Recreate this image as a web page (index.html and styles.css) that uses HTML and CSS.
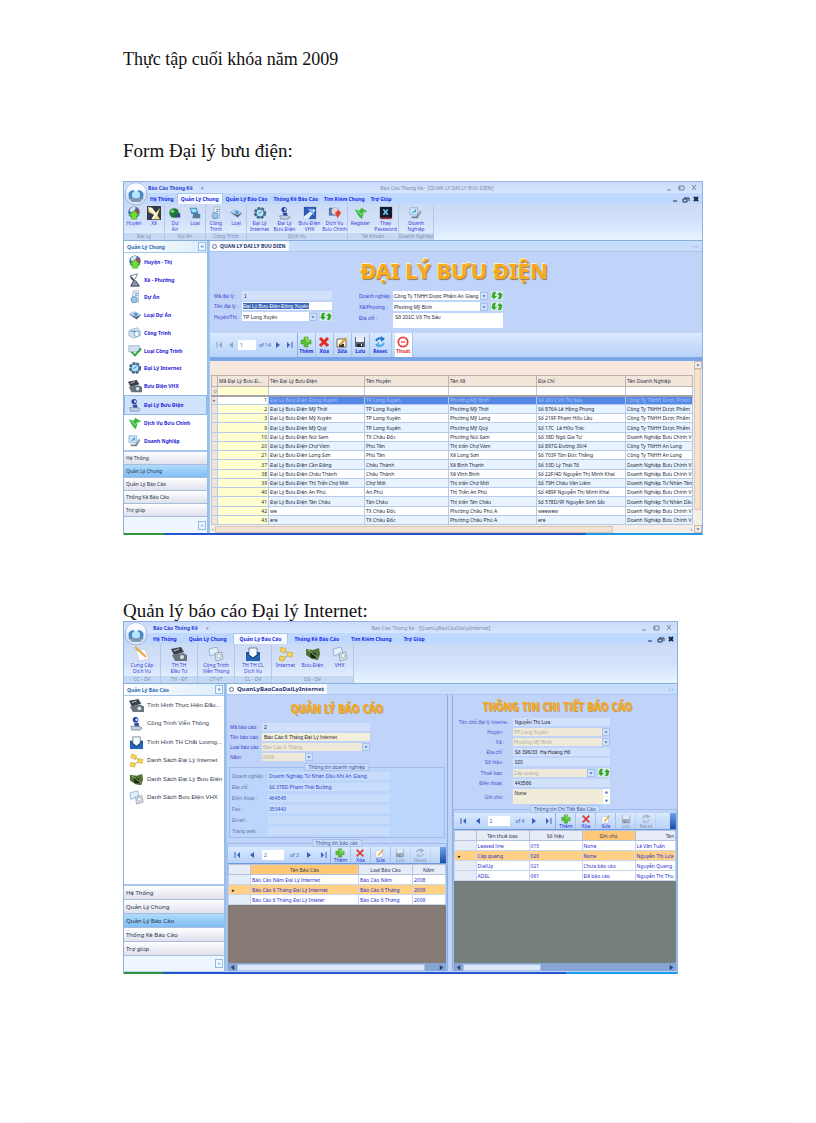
FILE: index.html
```html
<!DOCTYPE html>
<html lang="vi">
<head>
<meta charset="utf-8">
<title>Thực tập cuối khóa năm 2009</title>
<link rel="stylesheet" href="styles.css">
</head>
<body>
<svg class="defs" aria-hidden="true">
  <symbol id="orb" viewBox="0 0 24 24"><circle cx="12" cy="12" r="11" fill="#dde7f5" stroke="#9fb6da"/><path d="M2 10a10 9 0 0 1 20 0q-10 4-20 0z" fill="#f6faff"/><path d="M5 16q-2-7 4-8l3 2 3-2q6 1 4 8z" fill="#4b87c4"/><circle cx="12" cy="13" r="4" fill="#b4e5f9"/><path d="M4 16h16l-4 4H8z" fill="#8098bd"/></symbol>
  <symbol id="globe" viewBox="0 0 16 16"><circle cx="8" cy="7" r="6.5" fill="#4772a8"/><path d="M3 4q4-5 7-2L8 6 4 7z" fill="#d7e6f2"/><path d="M11 3l3 3-2 4-3-4z" fill="#b04848"/><path d="M8 5l6 6h-3v4H5v-4H2z" fill="#6fe02f" stroke="#2f9c16" stroke-width=".5"/></symbol>
  <symbol id="dish" viewBox="0 0 16 16"><path d="M2 2q1 8 8 8z" fill="#47516b"/><path d="M3 3l8-2-3 6" fill="none" stroke="#67738f"/><path d="M7 8l-4 7h10L9 9" fill="#8a94ad" stroke="#343c52"/></symbol>
  <symbol id="dishy" viewBox="0 0 16 16"><rect width="16" height="16" fill="#33394a"/><path d="M1 1l5 1 4 6 5-6-3 9 3 4H7l1-5-6-3z" fill="#f3df8c"/><path d="M3 2l7 7-4 6" stroke="#fff" stroke-width="2" fill="none"/></symbol>
  <symbol id="doc" viewBox="0 0 16 16"><path d="M6 1h6v13H4z" fill="#dfeaf5" stroke="#8baac8" stroke-width=".7"/><circle cx="7" cy="11" r="3.5" fill="#9dc3e6" stroke="#6b93bb"/><path d="M8 4h3M8 6h3" stroke="#6b93bb"/></symbol>
  <symbol id="ball" viewBox="0 0 16 16"><circle cx="7" cy="8" r="5.5" fill="#1e7a35"/><circle cx="5" cy="6" r="2" fill="#75cc75"/><path d="M8 10l6-2v5H8z" fill="#2f4a82"/></symbol>
  <symbol id="drive" viewBox="0 0 16 16"><path d="M1 7l6-3 8 4-5 5z" fill="#596a80"/><path d="M1 7l6-3 8 4-6 2z" fill="#b6d1e8"/><circle cx="9" cy="7" r="2" fill="#4d9cdb"/></symbol>
  <symbol id="screen" viewBox="0 0 16 16"><path d="M2 2h8l2 7H4z" fill="#3d86bc"/><path d="M3 3h6l1 4H5z" fill="#a4dff5"/><path d="M6 9h8v5H5z" fill="#567a88"/></symbol>
  <symbol id="print" viewBox="0 0 16 16"><path d="M1 5l9-3 4 3v6l-8 3-5-3z" fill="#cfe2ef" stroke="#7da5bd" stroke-width=".7"/><circle cx="10" cy="9" r="3" fill="#fff" stroke="#5c9cc5"/><path d="M3 6h6" stroke="#387bab"/></symbol>
  <symbol id="check" viewBox="0 0 16 16"><path d="M1 2h12v7H1z" fill="#d2e1f1" stroke="#789bbd" stroke-width=".7"/><path d="M4 9l4 4 7-8" fill="none" stroke="#2ca23c" stroke-width="2.2"/></symbol>
  <symbol id="gear" viewBox="0 0 16 16"><circle cx="8" cy="8" r="5.5" fill="#4787b0" stroke="#4c6683" stroke-width="3" stroke-dasharray="3 1.5"/><circle cx="8" cy="8" r="3.8" fill="#b4e5fa"/><path d="M6 9l4-3" stroke="#2c78ab"/></symbol>
  <symbol id="machine" viewBox="0 0 16 16"><path d="M0 3l10-2 3 5-10 3z" fill="#3a4149"/><path d="M3 5l5-2" stroke="#cbd5dc"/><path d="M1 9l11-2 4 2v6H4z" fill="#69747d"/><circle cx="11" cy="11" r="2" fill="#dbe5eb"/></symbol>
  <symbol id="person" viewBox="0 0 16 16"><circle cx="7" cy="4" r="3" fill="#243d9c"/><circle cx="8" cy="4" r="1.3" fill="#dce6ff"/><path d="M5 8l5-1 1 4-4 1z" fill="#354aa2"/><path d="M2 11h9l3 2-2 2H3z" fill="#c5d0e3" stroke="#65748e" stroke-width=".7"/></symbol>
  <symbol id="leaf" viewBox="0 0 16 16"><path d="M1 4l6 1 1-3 7 4-4 2-2 7-4-4z" fill="#35b83c"/><path d="M4 5l4 5 4-4" stroke="#bdf5ad" fill="none"/></symbol>
  <symbol id="monitor" viewBox="0 0 16 16"><path d="M1 2h9v8H1z" fill="#cee4f5" stroke="#7b9fbd" stroke-width=".7"/><path d="M3 8l5-5v4z" fill="#4fa7dc"/><path d="M7 13l6-8 1 2-4 7z" fill="#8c98a7"/><path d="M3 12h7v2H3z" fill="#78818f"/></symbol>
  <symbol id="bluebox" viewBox="0 0 16 16"><rect x="1" y="1" width="14" height="14" fill="#2b59b5"/><path d="M1 12L12 3l2 2-8 10H1z" fill="#e2edfb"/><path d="M5 3h6l2 8z" fill="#86b4ec"/></symbol>
  <symbol id="redbox" viewBox="0 0 16 16"><path d="M1 2h10v9H1z" fill="#5878a8"/><circle cx="8" cy="6" r="4" fill="#e5cfd5"/><path d="M8 8l4-4 3 4-4 6z" fill="#dc4834"/></symbol>
  <symbol id="key" viewBox="0 0 16 16"><rect x="1" y="1" width="14" height="13" fill="#12192d"/><path d="M5 4l5 6M10 4l-5 6" stroke="#65cbe8" stroke-width="2"/><path d="M2 14h12" stroke="#9a2a35" stroke-width="2"/></symbol>
  <symbol id="pen" viewBox="0 0 16 16"><path d="M2 5l9-2 4 10-10 2z" fill="#fcfcff" stroke="#b8c5dc" stroke-width=".7"/><path d="M1 1l11 10" stroke="#e3a739" stroke-width="2"/></symbol>
  <symbol id="mail" viewBox="0 0 16 16"><path d="M1 6h14v9H1z" fill="#2266b5"/><path d="M4 2h8v7l-4 3-4-3z" fill="#f6faff" stroke="#273c5c" stroke-width=".6"/><path d="M1 7l7 5 7-5" stroke="#163e77" fill="none"/></symbol>
  <symbol id="net" viewBox="0 0 16 16"><path d="M5 4l7 4-7 5" fill="none" stroke="#91a4b8"/><path d="M3 1l5 2-1 4-5-2zM10 6l5 1-1 4-5-1zM2 10l5 1-1 4-5-1z" fill="#f7d654" stroke="#c69d24" stroke-width=".6"/></symbol>
  <symbol id="chip" viewBox="0 0 16 16"><path d="M1 3l7 1 6-2 1 6-2 6-6-1-6-4z" fill="#4f7434"/><path d="M5 6l5 1 2 5H6z" fill="#182514"/><path d="M3 4l10 8" stroke="#a2bc7c"/></symbol>
  <symbol id="cards" viewBox="0 0 16 16"><path d="M1 3l8-2 2 6-9 3z" fill="#e5f1fa" stroke="#73a0c7" stroke-width=".7"/><path d="M7 7l7-1 1 7-7 2z" fill="#dce3eb" stroke="#8692a2" stroke-width=".7"/><circle cx="11" cy="10" r="2" fill="#fff" stroke="#7b8f9f" stroke-width=".6"/></symbol>
  <symbol id="plus" viewBox="0 0 12 12"><path d="M4 1h4v3h3v4H8v3H4V8H1V4h3z" fill="#5abf34" stroke="#45992f" stroke-width=".6"/><path d="M5 2h2v3h3" stroke="#adeb82" fill="none"/></symbol>
  <symbol id="cross" viewBox="0 0 12 12"><path d="M2 2l8 8M10 2l-8 8" stroke="#e02c20" stroke-width="3"/></symbol>
  <symbol id="thincross" viewBox="0 0 12 12"><path d="M2 2l8 8M10 2l-8 8" stroke="#dd3a2c" stroke-width="2"/></symbol>
  <symbol id="edit" viewBox="0 0 12 12"><path d="M1 3h9v8H1z" fill="#fbfaf2" stroke="#766a5a"/><path d="M3 8h5v3H3z" fill="#333"/><path d="M4 9l6-7" stroke="#dd9827" stroke-width="2"/></symbol>
  <symbol id="note" viewBox="0 0 12 12"><path d="M1 3h8v8H1z" fill="#fdfdff" stroke="#b3bfd4" stroke-width=".7"/><path d="M4 9l6-7" stroke="#e3a233" stroke-width="1.6"/></symbol>
  <symbol id="disk" viewBox="0 0 12 12"><path d="M1 1h10v10H1z" fill="#5e6276"/><path d="M2 1h8v5H2z" fill="#edf0f8"/><path d="M3 8h6v3H3z" fill="#252a3a"/><path d="M7 8h1v2H7z" fill="#fff"/></symbol>
  <symbol id="reset" viewBox="0 0 12 12"><path d="M2 5q2-4 6-2" fill="none" stroke="#2376c9" stroke-width="2"/><path d="M7 0l4 3-4 3z" fill="#2376c9"/><path d="M10 7q-2 4-6 2" fill="none" stroke="#51a7df" stroke-width="2"/><path d="M5 6L1 9l4 3z" fill="#51a7df"/></symbol>
  <symbol id="stop" viewBox="0 0 12 12"><circle cx="6" cy="6" r="4.7" fill="#fff" stroke="#ef3f3f" stroke-width="1.8"/><path d="M4 6h4" stroke="#ef3636" stroke-width="1.2"/></symbol>
  <symbol id="swap" viewBox="0 0 12 9"><rect width="12" height="9" rx="1" fill="#d9ebe6"/><path d="M5 1Q1 0 1 5H0l3 3 3-3H4q0-2 1-4zM7 8q4 1 4-4h1L9 1 6 4h2q0 2-1 4z" fill="#39a832"/></symbol>
  <symbol id="first" viewBox="0 0 8 8"><path d="M1 1v6" stroke="currentColor"/><path d="M6 1L3 4l3 3z" fill="currentColor"/></symbol>
  <symbol id="prev" viewBox="0 0 8 8"><path d="M6 1L2 4l4 3z" fill="currentColor"/></symbol>
  <symbol id="next" viewBox="0 0 8 8"><path d="M2 1l4 3-4 3z" fill="currentColor"/></symbol>
  <symbol id="last" viewBox="0 0 8 8"><path d="M7 1v6" stroke="currentColor"/><path d="M2 1l3 3-3 3z" fill="currentColor"/></symbol>
  <symbol id="down" viewBox="0 0 8 8"><path d="M2 3h4L4 6z" fill="#4a74b0"/></symbol>
  <symbol id="up" viewBox="0 0 8 8"><path d="M2 5h4L4 2z" fill="#4a74b0"/></symbol>
  <symbol id="winbtns" viewBox="0 0 32 8"><path d="M1 6h4M13 2h5v4h-5zM12 4h3M26 1l4 5M30 1l-4 5" fill="none" stroke="#7887a0"/></symbol>
  <symbol id="mdibtns" viewBox="0 0 28 8"><path d="M1 6h4M11 4h4v3h-4zM12 3h5v3" fill="none" stroke="#25304a"/><path d="M22 2l4 4M26 2l-4 4" stroke="#1c2436" stroke-width="2"/></symbol>
</svg>

<div class="page">
<header class="running">Thực tập cuối khóa năm 2009</header>

<h2 class="caption first">Form Đại lý bưu điện:</h2>
<section class="window win-a">
  <div class="titlebar">
    <svg class="orb"><use href="#orb"/></svg>
    <b class="quick">Báo Cáo Thống Kê</b><span class="tick">▾</span>
    <span class="wtitle">Bao Cao Thong Ke - [QUAN LY DAI LY BUU DIEN]</span>
    <svg class="winbtns"><use href="#winbtns"/></svg>
  </div>
  <nav class="tabs">
    <button>Hệ Thống</button><button class="on">Quản Lý Chung</button><button>Quản Lý Báo Cáo</button><button>Thống Kê Báo Cáo</button><button>Tìm Kiếm Chung</button><button>Trợ Giúp</button>
    <svg class="mdibtns"><use href="#mdibtns"/></svg>
  </nav>
  <div class="ribbon">
    <div class="rgroup"><div class="ritems"><button><svg><use href="#globe"/></svg>Huyện</button><button><svg><use href="#dishy"/></svg>Xã</button></div><div class="rcap">Đại Lý</div></div>
    <div class="rgroup"><div class="ritems"><button><svg><use href="#ball"/></svg>Dự<br>Án</button><button><svg><use href="#screen"/></svg>Loại</button></div><div class="rcap">Dự Án</div></div>
    <div class="rgroup"><div class="ritems"><button><svg><use href="#doc"/></svg>Công<br>Trình</button><button><svg><use href="#drive"/></svg>Loại</button></div><div class="rcap">Công Trình</div></div>
    <div class="rgroup wide"><div class="ritems"><button><svg><use href="#gear"/></svg>Đại Lý<br>Internet</button><button><svg><use href="#person"/></svg>Đại Lý<br>Bưu Điện</button><button><svg><use href="#bluebox"/></svg>Bưu Điện<br>VHX</button><button><svg><use href="#redbox"/></svg>Dịch Vụ<br>Bưu Chính</button></div><div class="rcap">Dịch Vụ</div></div>
    <div class="rgroup wide"><div class="ritems"><button><svg><use href="#leaf"/></svg>Register</button><button><svg><use href="#key"/></svg>Thay<br>Password</button></div><div class="rcap">Tài Khoản</div></div>
    <div class="rgroup wide"><div class="ritems"><button><svg><use href="#monitor"/></svg>Doanh<br>Nghiệp</button></div><div class="rcap">Doanh Nghiệp</div></div>
  </div>
  <div class="body">
    <aside class="side">
      <div class="sidehead"><span>Quản Lý Chung</span><button class="fold" aria-label="Thu gọn">«</button></div>
      <ul class="sidelist">
        <li><svg><use href="#globe"/></svg>Huyện - Thị</li>
        <li><svg><use href="#dish"/></svg>Xã - Phường</li>
        <li><svg><use href="#doc"/></svg>Dự Án</li>
        <li><svg><use href="#drive"/></svg>Loại Dự Án</li>
        <li><svg><use href="#print"/></svg>Công Trình</li>
        <li><svg><use href="#check"/></svg>Loại Công Trình</li>
        <li><svg><use href="#gear"/></svg>Đại Lý Internet</li>
        <li><svg><use href="#machine"/></svg>Bưu Điện VHX</li>
        <li class="on"><svg><use href="#person"/></svg>Đại Lý Bưu Điện</li>
        <li><svg><use href="#leaf"/></svg>Dịch Vụ Bưu Chính</li>
        <li><svg><use href="#monitor"/></svg>Doanh Nghiệp</li>
      </ul>
      <div class="accordion"><button>Hệ Thống</button><button class="on">Quản Lý Chung</button><button>Quản Lý Báo Cáo</button><button>Thống Kê Báo Cáo</button><button>Trợ giúp</button></div>
      <div class="sidefoot"><button class="fold" aria-label="Tùy chọn">»</button></div>
    </aside>
    <main class="main">
      <div class="doctabs"><span class="doctab"><i></i>QUAN LY DAI LY BUU DIEN</span><span class="docnav">‹ ›</span></div>
      <form class="hero">
        <h1>ĐẠI LÝ BƯU ĐIỆN</h1>
        <div class="cols">
          <div class="fields fa">
            <label for="a1">Mã đại lý :</label><input id="a1" class="flat" value="1">
            <label for="a2">Tên đại lý :</label><span class="inputbox"><mark>Đại Lý Bưu Điện Đông Xuyên</mark><input id="a2" aria-label="Tên đại lý"></span>
            <label for="a3">Huyện/Thị :</label><span class="combo"><select id="a3"><option>TP Long Xuyên</option></select><svg class="arr"><use href="#down"/></svg><svg class="swap"><use href="#swap"/></svg></span>
          </div>
          <div class="fields fb">
            <label for="a4">Doanh nghiệp :</label><span class="combo"><select id="a4"><option>Công Ty TNHH Dược Phẩm An Giang</option></select><svg class="arr"><use href="#down"/></svg><svg class="swap"><use href="#swap"/></svg></span>
            <label for="a5">Xã/Phường :</label><span class="combo"><select id="a5"><option>Phường Mỹ Bình</option></select><svg class="arr"><use href="#down"/></svg><svg class="swap"><use href="#swap"/></svg></span>
            <label for="a6">Địa chỉ :</label><textarea id="a6">Số 201C Võ Thị Sáu</textarea>
          </div>
        </div>
      </form>
      <div class="toolbar">
        <div class="pager"><svg class="dim"><use href="#first"/></svg><svg class="dim"><use href="#prev"/></svg><input aria-label="Trang" value="1"><span>of 14</span><svg><use href="#next"/></svg><svg><use href="#last"/></svg></div>
        <button><svg><use href="#plus"/></svg>Thêm</button><button><svg><use href="#cross"/></svg>Xóa</button><button><svg><use href="#edit"/></svg>Sửa</button><button><svg><use href="#disk"/></svg>Lưu</button><button class="sp"><svg><use href="#reset"/></svg>Reset</button><button class="hot"><svg><use href="#stop"/></svg>Thoát</button>
      </div>
      <div class="gridwrap">
        <div class="gridpane">
          <div class="band"></div>
          <table class="grid-a">
            <colgroup><col class="c1"><col class="c2"><col class="c3"><col class="c4"><col class="c5"><col class="c6"><col></colgroup>
            <thead><tr><th></th><th>Mã Đại Lý Bưu Đ...</th><th>Tên Đại Lý Bưu Điện</th><th>Tên Huyện</th><th>Tên Xã</th><th>Địa Chỉ</th><th>Tên Doanh Nghiệp</th></tr>
            <tr class="filter"><td>⊙</td><td></td><td></td><td></td><td></td><td></td><td></td></tr></thead>
            <tbody>
            <tr class="sel"><td>▸</td><td>1</td><td>Đại Lý Bưu Điện Đông Xuyên</td><td>TP Long Xuyên</td><td>Phường Mỹ Bình</td><td>Số 201C Võ Thị Sáu</td><td>Công Ty TNHH Dược Phẩm</td></tr>
            <tr><td></td><td>2</td><td>Đại Lý Bưu Điện Mỹ Thới</td><td>TP Long Xuyên</td><td>Phường Mỹ Thới</td><td>Số 876A Lê Hồng Phong</td><td>Công Ty TNHH Dược Phẩm</td></tr>
            <tr><td></td><td>3</td><td>Đại Lý Bưu Điện Mỹ Xuyên</td><td>TP Long Xuyên</td><td>Phường Mỹ Long</td><td>Số 219F Phạm Hữu Lầu</td><td>Công Ty TNHH Dược Phẩm</td></tr>
            <tr><td></td><td>9</td><td>Đại Lý Bưu Điện Mỹ Quý</td><td>TP Long Xuyên</td><td>Phường Mỹ Quý</td><td>Số 17C&nbsp; Lê Hữu Trác</td><td>Công Ty TNHH Dược Phẩm</td></tr>
            <tr><td></td><td>10</td><td>Đại Lý Bưu Điện Núi Sam</td><td>TX Châu Đốc</td><td>Phường Núi Sam</td><td>Số 38D Ngô Gia Tự</td><td>Doanh Nghiệp Bưu Chính V</td></tr>
            <tr><td></td><td>20</td><td>Đại Lý Bưu Điện Chợ Vàm</td><td>Phú Tân</td><td>Thị trấn Chợ Vàm</td><td>Số 897G Đường 30/4</td><td>Công Ty TNHH An Long</td></tr>
            <tr><td></td><td>21</td><td>Đại Lý Bưu Điện Long Sơn</td><td>Phú Tân</td><td>Xã Long Sơn</td><td>Số 703F Tôn Đức Thắng</td><td>Công Ty TNHH An Long</td></tr>
            <tr><td></td><td>37</td><td>Đại Lý Bưu Điện Cần Đăng</td><td>Châu Thành</td><td>Xã Bình Thạnh</td><td>Số 33D Lý Thái Tổ</td><td>Doanh Nghiệp Bưu Chính V</td></tr>
            <tr><td></td><td>38</td><td>Đại Lý Bưu Điện Châu Thành</td><td>Châu Thành</td><td>Xã Vĩnh Bình</td><td>Số 22F/4D Nguyễn Thị Minh Khai</td><td>Doanh Nghiệp Bưu Chính V</td></tr>
            <tr><td></td><td>39</td><td>Đại Lý Bưu Điện Thị Trấn Chợ Mới</td><td>Chợ Mới</td><td>Thị trấn Chợ Mới</td><td>Số 79H Châu Văn Liêm</td><td>Doanh Nghiệp Tư Nhân Tân</td></tr>
            <tr><td></td><td>40</td><td>Đại Lý Bưu Điện An Phú</td><td>An Phú</td><td>Thị Trấn An Phú</td><td>Số 489F Nguyễn Thị Minh Khai</td><td>Doanh Nghiệp Bưu Chính V</td></tr>
            <tr><td></td><td>41</td><td>Đại Lý Bưu Điện Tân Châu</td><td>Tân Châu</td><td>Thị trấn Tân Châu</td><td>Số 578D/9F Nguyễn Sinh Sắc</td><td>Doanh Nghiệp Tư Nhân Dầu</td></tr>
            <tr><td></td><td>42</td><td>we</td><td>TX Châu Đốc</td><td>Phường Châu Phú A</td><td>weewew</td><td>Doanh Nghiệp Bưu Chính V</td></tr>
            <tr><td></td><td>43</td><td>ere</td><td>TX Châu Đốc</td><td>Phường Châu Phú A</td><td>ere</td><td>Doanh Nghiệp Bưu Chính V</td></tr>
            </tbody>
          </table>
          <div class="hscroll"><span>‹</span><i></i><span>›</span></div>
        </div>
        <div class="vscroll"><svg><use href="#up"/></svg><i></i><svg><use href="#down"/></svg></div>
      </div>
    </main>
  </div>
  <div class="taskbar"></div>
</section>

<h2 class="caption second">Quản lý báo cáo Đại lý Internet:</h2>
<section class="window win-b">
  <div class="titlebar">
    <svg class="orb"><use href="#orb"/></svg>
    <b class="quick">Báo Cáo Thống Kê</b><span class="tick">▾</span>
    <span class="wtitle">Bao Cao Thong Ke - [QuanLyBaoCaoDaiLyInternet]</span>
    <svg class="winbtns"><use href="#winbtns"/></svg>
  </div>
  <nav class="tabs">
    <button>Hệ Thống</button><button>Quản Lý Chung</button><button class="on">Quản Lý Báo Cáo</button><button>Thống Kê Báo Cáo</button><button>Tìm Kiếm Chung</button><button>Trợ Giúp</button>
    <svg class="mdibtns"><use href="#mdibtns"/></svg>
  </nav>
  <div class="ribbon">
    <div class="rgroup"><div class="ritems"><button><svg><use href="#pen"/></svg>Cung Cấp<br>Dịch Vụ</button></div><div class="rcap">CC - DV</div></div>
    <div class="rgroup"><div class="ritems"><button><svg><use href="#machine"/></svg>TH TH<br>Đầu Tư</button></div><div class="rcap">TH - ĐT</div></div>
    <div class="rgroup"><div class="ritems"><button><svg><use href="#cards"/></svg>Công Trình<br>Viễn Thông</button></div><div class="rcap">CT-VT</div></div>
    <div class="rgroup"><div class="ritems"><button><svg><use href="#mail"/></svg>TH TH CL<br>Dịch Vụ</button></div><div class="rcap">CL - DV</div></div>
    <div class="rgroup trio"><div class="ritems"><button><svg><use href="#net"/></svg>Internet</button><button><svg><use href="#chip"/></svg>Bưu Điện</button><button><svg><use href="#cards"/></svg>VHX</button></div><div class="rcap">DS - DV</div></div>
  </div>
  <div class="body">
    <aside class="side">
      <div class="sidehead"><span>Quản Lý Báo Cáo</span><button class="fold" aria-label="Thu gọn">«</button></div>
      <ul class="sidelist">
        <li><svg><use href="#machine"/></svg>Tình Hình Thực Hiện Đầu...</li>
        <li><svg><use href="#person"/></svg>Công Trình Viễn Thông</li>
        <li><svg><use href="#mail"/></svg>Tình Hình TH Chất Lượng...</li>
        <li><svg><use href="#net"/></svg>Danh Sách Đại Lý Internet</li>
        <li><svg><use href="#chip"/></svg>Danh Sách Đại Lý Bưu Điện</li>
        <li><svg><use href="#cards"/></svg>Danh Sách Bưu Điện VHX</li>
      </ul>
      <div class="accordion"><button>Hệ Thống</button><button>Quản Lý Chung</button><button class="on">Quản Lý Báo Cáo</button><button>Thống Kê Báo Cáo</button><button>Trợ giúp</button></div>
      <div class="sidefoot"><button class="fold" aria-label="Tùy chọn">»</button></div>
    </aside>
    <main class="main">
      <div class="doctabs"><span class="doctab"><i></i>QuanLyBaoCaoDaiLyInternet</span><span class="docnav">‹ ›</span></div>
      <div class="split">
        <div class="pane left">
          <h1>QUẢN LÝ BÁO CÁO</h1>
          <div class="fields fc">
            <label for="b1">Mã báo cáo:</label><input id="b1" class="flat" value="2">
            <label for="b2">Tên báo cáo:</label><input id="b2" class="cream" value="Báo Cáo 6 Tháng Đại Lý Internet">
            <label for="b3">Loại báo cáo:</label><span class="combo off"><select id="b3"><option>Báo Cáo 6 Tháng</option></select><svg class="arr"><use href="#down"/></svg></span>
            <label for="b4">Năm:</label><span class="combo off short"><select id="b4"><option>2009</option></select><svg class="arr"><use href="#down"/></svg></span>
          </div>
          <fieldset class="info"><legend>Thông tin doanh nghiệp</legend>
            <dl><dt>Doanh nghiệp :</dt><dd>Doanh Nghiệp Tư Nhân Dầu Khí An Giang</dd><dt>Địa chỉ :</dt><dd>Số 378D Phạm Thái Bường</dd><dt>Điện thoại :</dt><dd>464545</dd><dt>Fax :</dt><dd>353443</dd><dt>Email :</dt><dd></dd><dt>Trang web :</dt><dd></dd></dl>
          </fieldset>
          <fieldset class="listbox"><legend>Thông tin báo cáo</legend>
            <div class="toolbar">
              <div class="pager"><svg><use href="#first"/></svg><svg><use href="#prev"/></svg><input aria-label="Trang" value="2"><span>of 3</span><svg><use href="#next"/></svg><svg><use href="#last"/></svg></div>
              <button><svg><use href="#plus"/></svg>Thêm</button><button><svg><use href="#thincross"/></svg>Xóa</button><button><svg><use href="#note"/></svg>Sửa</button><button class="faded"><svg><use href="#disk"/></svg>Lưu</button><button class="faded"><svg><use href="#reset"/></svg>Reset</button><i class="grip"></i>
            </div>
            <table class="grid-b">
              <colgroup><col class="d1"><col class="d2"><col class="d4"><col></colgroup>
              <thead><tr><th></th><th class="hot">Tên Báo Cáo</th><th>Loại Báo Cáo</th><th>Năm</th></tr></thead>
              <tbody><tr><td></td><td>Báo Cáo Năm Đại Lý Internet</td><td>Báo Cáo Năm</td><td>2008</td></tr>
              <tr class="sel"><td>▸</td><td>Báo Cáo 6 Tháng Đại Lý Internet</td><td>Báo Cáo 6 Tháng</td><td>2009</td></tr>
              <tr><td></td><td>Báo Cáo 6 Tháng Đại Lý Inteter</td><td>Báo Cáo 6 Tháng</td><td>2009</td></tr></tbody>
            </table>
            <div class="void"></div>
            <div class="hscroll"><svg><use href="#prev"/></svg><i></i><svg><use href="#next"/></svg></div>
          </fieldset>
        </div>
        <div class="pane right">
          <h1>THÔNG TIN CHI TIẾT BÁO CÁO</h1>
          <div class="fields fd">
            <label for="e1">Tên chủ đại lý Interne..</label><input id="e1" class="flat" value="Nguyễn Thị Lựa">
            <label for="e2">Huyện :</label><span class="combo off"><select id="e2"><option>TP Long Xuyên</option></select><svg class="arr"><use href="#down"/></svg></span>
            <label for="e3">Xã :</label><span class="combo off"><select id="e3"><option>Phường Mỹ Bình</option></select><svg class="arr"><use href="#down"/></svg></span>
            <label for="e4">Địa chỉ :</label><input id="e4" class="flat" value="Số 396/33  Hạ Hoàng Hổ">
            <label for="e5">Số hiệu :</label><input id="e5" class="flat" value="020">
            <label for="e6">Thuê bao :</label><span class="combo off"><select id="e6"><option>Cáp quang</option></select><svg class="arr"><use href="#down"/></svg><svg class="swap"><use href="#swap"/></svg></span>
            <label for="e7">Điện thoại :</label><input id="e7" class="flat" value="443566">
            <label for="e8">Ghi chú :</label><span class="memo"><textarea id="e8">None</textarea><span><svg><use href="#up"/></svg><svg><use href="#down"/></svg></span></span>
          </div>
          <fieldset class="listbox"><legend>Thông tin Chi Tiết Báo Cáo</legend>
            <div class="toolbar">
              <div class="pager"><svg><use href="#first"/></svg><svg><use href="#prev"/></svg><input aria-label="Trang" value="2"><span>of 4</span><svg><use href="#next"/></svg><svg><use href="#last"/></svg></div>
              <button><svg><use href="#plus"/></svg>Thêm</button><button><svg><use href="#thincross"/></svg>Xóa</button><button><svg><use href="#note"/></svg>Sửa</button><button class="faded"><svg><use href="#disk"/></svg>Lưu</button><button class="faded"><svg><use href="#reset"/></svg>Reset</button><i class="grip"></i>
            </div>
            <table class="grid-b">
              <colgroup><col class="d1"><col class="d3"><col class="d3"><col class="d3"><col></colgroup>
              <thead><tr><th></th><th>Tên thuê bao</th><th>Số hiệu</th><th class="hot">Ghi chú</th><th class="end">Tên</th></tr></thead>
              <tbody><tr><td></td><td>Leased line</td><td>015</td><td>None</td><td>Lê Văn Tuấn</td></tr>
              <tr class="sel"><td>▸</td><td>Cáp quang</td><td>020</td><td>None</td><td>Nguyễn Thị Lựa</td></tr>
              <tr><td></td><td>DialUp</td><td>021</td><td>Chưa báo cáo</td><td>Nguyễn Quang</td></tr>
              <tr><td></td><td>ADSL</td><td>061</td><td>Đã báo cáo</td><td>Nguyễn Thị Thu</td></tr></tbody>
            </table>
            <div class="void green"></div>
            <div class="hscroll half"><svg><use href="#prev"/></svg><i></i><svg><use href="#next"/></svg></div>
          </fieldset>
        </div>
      </div>
    </main>
  </div>
  <div class="taskbar"></div>
</section>
<footer class="edge"></footer>
</div>
</body>
</html>
```

FILE: styles.css
```css
* { box-sizing: border-box; }
body { margin: 0; background: #fff; color: #111; font-family: "Liberation Serif", serif; }
.defs { position: absolute; width: 0; height: 0; }
.page { min-height: 100vh; padding: 48px 24px 0 123px; display: flex; flex-direction: column; }
.running { font-size: 18px; line-height: 22px; }
.caption { margin: 0; font-size: 19px; line-height: 22px; font-weight: 400; }
.caption.first { margin-top: 70px; margin-bottom: 19px; }
.caption.second { margin-top: 65px; line-height: 21px; }
.edge { margin: auto 0 0 -98px; border-bottom: 1px dotted #e2e2e2; }

button, input, select, textarea { font: inherit; color: inherit; border: 0; padding: 0; margin: 0; background: none; border-radius: 0; min-width: 0; }
.window { width: 100%; font: 5px/6px "Noto Sans", sans-serif; color: #26304a; background: #c0d4f9; border: 1px solid #8fb2e2; border-bottom: 0; white-space: nowrap; }
.win-a { max-width: 580px; }
.win-b { max-width: 555px; }

.titlebar { height: 11px; display: flex; align-items: center; background: linear-gradient(#c9dafb, #d7e6fd); position: relative; padding-right: 4px; }
.orb { position: absolute; left: 0; top: 0; width: 24px; height: 24px; z-index: 1; }
.quick { margin-left: 24px; color: #2a3ecb; }
.tick { margin-left: 8px; color: #7d8aa6; }
.wtitle { flex: 1; text-align: center; color: #7d8aa6; padding-left: 4px; }
.winbtns { width: 32px; height: 8px; }
.tabs { height: 11px; display: flex; align-items: stretch; background: #bfd8ff; padding: 0 2px 0 23px; }
.tabs button { color: #2129e6; font-weight: 700; padding: 0 3px; }
.tabs .on { background: #f4f8ff; border: 1px solid #a8c6ee; border-bottom: 0; }
.mdibtns { width: 28px; height: 8px; margin: 2px 0 0 auto; }
.win-b .quick { margin-left: 29px; }
.win-b .wtitle { padding-left: 12px; }
.win-b .tabs { padding-left: 23px; }
.win-b .tabs button { padding: 0 6px; }

.ribbon { height: 37px; display: flex; background: linear-gradient(#cddaf4, #d3e1fa 50%, #e8f4ff); border-bottom: 1px solid #86aed8; }
.rgroup { display: flex; flex-direction: column; border-right: 1px solid #b4c9e8; padding-top: 2px; }
.ritems { display: flex; flex: 1; align-items: flex-start; }
.ritems button { width: 20px; color: #3c42d8; text-align: center; line-height: 6px; }
.wide .ritems button { width: 25px; }
.wide:last-child .ritems button { margin: 0 auto; }
.ritems svg { display: block; width: 14px; height: 14px; margin: 0 auto; }
.rcap { text-align: center; color: #7e8db0; background: #c5d9f5; line-height: 7px; }
.win-b .ribbon { height: 40px; }
.win-b .ritems button { width: 36px; }
.win-b .ritems svg { width: 16px; height: 16px; }
.win-b .trio .ritems button { width: 27px; }

.body { display: flex; height: 292px; }
.side { width: 85px; display: flex; flex-direction: column; background: #fff; border-right: 2px solid #97bde8; }
.sidehead { height: 12px; display: flex; align-items: center; justify-content: space-between; padding: 0 1px 0 3px; color: #2d68b0; background: linear-gradient(90deg, #fff, #ddecfb); border-bottom: 1px solid #a7c9ec; font-weight: 700; }
.fold { width: 8px; height: 9px; border: 1px solid #90bce8; color: #3c7dc4; background: #eef7ff; line-height: 5px; }
.sidelist { list-style: none; flex: 1; margin: 0; padding: 0; display: flex; flex-direction: column; }
.sidelist li { flex: 1; display: flex; align-items: center; gap: 2px; padding-left: 4px; color: #1f20d8; font-weight: 700; }
.sidelist svg { width: 14px; height: 14px; }
.sidelist .on { background: #cfe3fb; border: 1px solid #8cb8ea; padding-left: 3px; }
.accordion { border-top: 2px solid #a6c8ee; display: flex; flex-direction: column; }
.accordion button { height: 13px; text-align: left; padding-left: 2px; background: linear-gradient(#fff, #dfe1ec); border-bottom: 1px solid #a8bddc; }
.accordion .on { background: linear-gradient(#b0dbfb, #80bdf5); }
.sidefoot { height: 16px; display: flex; justify-content: flex-end; align-items: center; background: #eef6ff; padding-right: 1px; }
.win-b .body { height: 288px; padding-bottom: 1px; }
.win-b .sidefoot { height: 15px; }
.win-b .side { width: 102px; }
.win-b .sidelist { padding-right: 2px; }
.win-b .sidelist li { flex: none; height: 18px; font-family: "Liberation Sans", sans-serif; font-size: 6px; font-weight: 400; color: #333c52; padding-left: 5px; gap: 3px; }
.win-b .sidelist li:nth-child(even) { margin-bottom: 1px; }
.win-b .sidelist svg { width: 15px; height: 15px; flex: none; }
.win-b .accordion button { height: 14px; font-size: 6px; }

.main { flex: 1; min-width: 0; display: flex; flex-direction: column; border-left: 1px solid #a8c8f0; }
.doctabs { height: 11px; display: flex; justify-content: space-between; align-items: stretch; background: #c6ddfc; border-bottom: 1px solid #a9c8ee; padding-right: 4px; }
.doctab { display: flex; align-items: center; gap: 3px; padding: 0 3px 0 2px; background: #f6faff; color: #26356e; font-weight: 700; }
.win-b .doctab { font-size: 6px; }
.doctab i { width: 5px; height: 5px; border: 1px solid #6d7897; border-radius: 50%; }
.docnav { color: #5b7cb4; line-height: 10px; }

h1 { margin: 0; color: #f9a91b; font-family: "Noto Sans", sans-serif; font-weight: 700; text-align: center; text-shadow: 1px 1px 1px #8b7a62, -1px -1px 0 #fff0c0; }
.hero { padding: 7px 8px 5px 4px; }
.hero h1 { font-size: 22px; line-height: 22px; margin-bottom: 10px; }
.cols { display: flex; gap: 27px; }
.fields { display: grid; gap: 2px; align-content: start; align-items: center; color: #3a42d2; font-family: "Liberation Sans", sans-serif; }
.fields input, .fields select, .fields textarea { height: 9px; background: #fff; color: #1f2638; padding: 0 2px; width: 100%; appearance: none; }
.fields select { padding: 0 0 0 1px; }
.fields .flat { background: #d2e1fb; }
.fields .cream { background: #f4efda; }
.fa { grid-template-columns: 26px 90px; }
.fb { grid-template-columns: 33px 110px; column-gap: 1px; }
.fb label:last-of-type { align-self: start; margin-top: 2px; }
.fields textarea { display: block; height: 15px; resize: none; overflow: hidden; padding-top: 1px; }
.inputbox { display: flex; background: #fff; height: 8px; align-items: center; }
.inputbox mark { background: #3866b8; color: #fff; margin-left: 1px; }
.fields .inputbox input { height: 8px; flex: 1; width: 0; }
.combo { display: flex; align-items: center; }
.combo select { flex: 1; width: 0; }
.arr { width: 8px; height: 8px; background: #cfe2fb; border: 1px solid #a6c2e8; }
.swap { width: 12px; height: 9px; margin-left: 3px; }
.fields .off select { background: #eee9d8; color: #b4ada0; }

.toolbar { height: 24px; display: flex; align-items: stretch; background: linear-gradient(#d9e9ff, #b8d2f8); color: #2329d6; }
.pager { display: flex; align-items: center; gap: 3px; padding: 0 4px 0 4px; border-right: 1px solid #93b0dc; color: #3a5fb8; }
.pager svg { width: 8px; height: 8px; }
.pager .dim { color: #8da2c5; }
.pager input { width: 18px; height: 10px; background: #fff; padding-left: 2px; }
.toolbar button { width: 18px; border-right: 1px solid #a9c2e8; font-weight: 700; line-height: 6px; text-align: center; }
.toolbar button svg { display: block; width: 12px; height: 12px; margin: 0 auto; }
.toolbar .sp { width: 22px; margin-right: 3px; }
.toolbar .hot { background: #fff; color: #e23030; }
.win-a .toolbar { padding-left: 2px; }

.gridwrap { flex: 1; min-height: 0; display: flex; border-top: 4px solid #7ba6ea; background: #f3e9df; padding-left: 1px; }
.gridpane { flex: 1; min-width: 0; display: flex; flex-direction: column; overflow: hidden; }
.band { height: 14px; background: #f6e8dc; }
table { width: 100%; table-layout: fixed; border-collapse: collapse; }
th, td { padding: 0 1px; overflow: hidden; font-weight: 400; text-align: left; }
.grid-a th { height: 11px; background: #f2e6da; border: 1px solid #c0b3ac; }
.grid-a td { height: 9px; line-height: 6px; border: 1px solid #b6cbe9; background: #fff; color: #222a3e; }
.grid-a .filter td { border-bottom: 2px solid #a5a2a8; }
.grid-a td:first-child { background: #f3e4da; color: #8b6c62; }
.grid-a td:nth-child(2) { background: #ffffcf; text-align: right; }
.grid-a tbody tr:nth-child(even) td:nth-child(n+3) { background: #e8f3ff; }
.grid-a tbody tr:nth-child(4n) td { height: 10px; }
.grid-a tbody .sel td:nth-child(n+3) { background: #5588e4; color: #a9c5f8; }
.grid-a .sel td:nth-child(2) { background: #fff; }
.c1 { width: 6px; } .c2 { width: 51px; } .c3 { width: 96px; } .c4 { width: 84px; } .c5 { width: 88px; } .c6 { width: 89px; }
.grid-a td:last-child { padding-right: 0; }
.hscroll { height: 8px; flex: none; display: flex; align-items: center; background: #f4eee6; margin-top: auto; padding: 0 1px; gap: 1px; }
.hscroll i { flex: 1; height: 7px; background: #f3e2d1; border: 1px solid #d6c4b4; margin-right: 76px; }
.vscroll { width: 9px; display: flex; flex-direction: column; align-items: center; background: #f4eee6; }
.vscroll svg { width: 8px; height: 8px; border: 1px solid #cbb9ab; }
.vscroll i { flex: 1; width: 7px; background: #f5e2d0; border: 1px solid #dbc8b6; margin-bottom: 15px; }
.taskbar { height: 2px; background: linear-gradient(90deg, #2f9440 7%, #2457cf 7%, #2457cf 80%, #1b9ae6 80%); }

.split { flex: 1; min-height: 0; display: flex; gap: 4px; background: #c0d4f9; }
.pane { display: flex; flex-direction: column; min-width: 0; }
.left { flex: 221; border-right: 1px solid #8cb0e6; }
.right { flex: 226; border-left: 1px solid #8cb0e6; }
.pane h1 { font-family: "Liberation Sans Narrow", "Open Sans Condensed", "DejaVu Sans Condensed", sans-serif; font-size: 13px; line-height: 16px; text-shadow: 1px 1px 0 #b99a60; }
.left h1 { margin: 5px 0 7px; }
.right h1 { margin: 3px 0 4px 10px; text-align: left; padding-left: 20px; }
.fields.fc { grid-template-columns: 30px 108px; padding-left: 3px; }
.fc input, .fc select, .fields.fd input, .fields.fd select { height: 8px; }
.short { margin-right: 57px; }
.fields.fd { grid-template-columns: 53px 97px; padding-left: 5px; }
.fd label { text-align: right; padding-right: 6px; color: #4a50d0; }
.fd label:first-child { padding-right: 1px; }
.memo { display: flex; background: #f1ecd9; height: 15px; }
.fields .memo textarea { background: none; flex: 1; width: 0; }
.memo span { display: flex; flex-direction: column; justify-content: space-between; }
.memo svg { display: block; width: 7px; height: 7px; background: #fff; }
fieldset { margin: 0; padding: 0; border: 1px solid #9fbce6; min-width: 0; }
legend { margin: 0 auto; padding: 0 3px; color: #3c5595; line-height: 6px; border: 1px solid #a9c2e8; border-radius: 2px; background: #c9dcfa; height: 8px; }
.info { margin: 2px 2px 0; background: #bcd6fb; }
.info dl { margin: 1px 0; display: grid; grid-template-columns: 36px 122px; row-gap: 2px; padding-left: 2px; color: #6874a8; line-height: 8px; }
.info dd { margin: 0; padding-left: 1px; height: 8px; background: #c8ddfb; color: #2f3fd0; }
.info dt { height: 9px; font-family: "Liberation Sans", sans-serif; }
.listbox { flex: 1; min-height: 0; display: flex; flex-direction: column; border-bottom: 0; margin-top: 1px; }
.win-b .toolbar { height: 17px; flex: none; overflow: hidden; padding-left: 2px; border-bottom: 1px solid #6e9add; }
.win-b .pager { gap: 6px; padding-right: 3px; }
.win-b .toolbar button { width: 20px; line-height: 5px; font-weight: 400; }
.win-b .toolbar button svg { width: 10px; height: 10px; }
.faded { opacity: .4; filter: grayscale(1); }
.win-b .toolbar input { width: 22px; }
.grip { width: 6px; margin-left: auto; background: linear-gradient(#6f9fe6, #1d4ea8); }
.grid-b th { height: 10px; text-align: center; background: #e7ecf6; border: 1px solid #b4c4dd; color: #2c3a5c; }
.grid-b .hot { background: #ffc877; }
.grid-b .end { text-align: right; }
.grid-b td { height: 10px; background: #fff; border: 1px solid #c7d5ea; color: #2b2fd2; }
.grid-b td:first-child { background: #e4edf8; color: #111; padding-left: 3px; }
.grid-b .sel td { background: #ffd086; }
.grid-b td:last-child { padding-right: 0; }
.d1 { width: 22px; } .d2 { width: 108px; } .d3 { width: 53px; } .d4 { width: 54px; }
.void { flex: 1; background: #857a74; }
.void.green { background: #75807c; }
.win-b .hscroll { background: #86a5d4; color: #29436e; }
.win-b .hscroll svg { width: 7px; height: 7px; }
.win-b .hscroll i { margin-right: 12px; background: #dbe9fb; border-color: #a9c2e6; }
.win-b .half i { margin-right: 126px; }
```
